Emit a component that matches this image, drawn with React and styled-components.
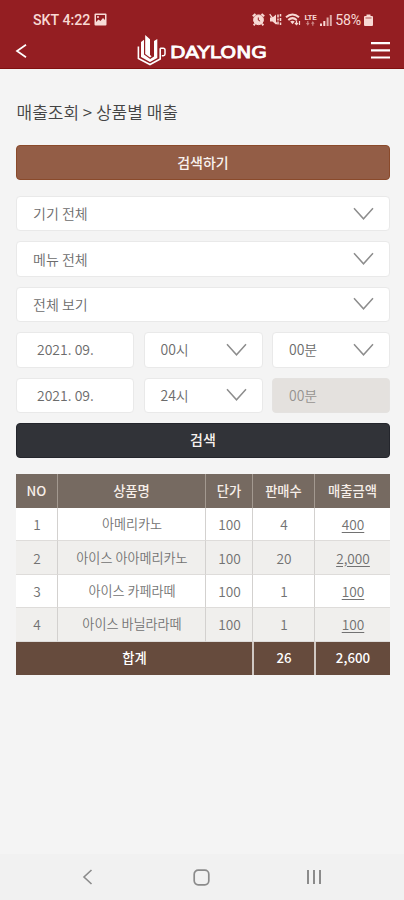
import React from "react";
import styled, { createGlobalStyle, css } from "styled-components";

const GlobalStyle = createGlobalStyle`
  * {
    box-sizing: border-box;
  }

  body {
    margin: 0;
    background: #f4f4f4;
    color: #666;
    font-family: "Noto Sans CJK KR", "Noto Sans", sans-serif;
  }
`;

const Screen = styled.div`
  display: flex;
  flex-direction: column;
  width: 404px;
  height: 900px;
  overflow: hidden;
`;

const Header = styled.header`
  height: 69px;
  flex: none;
  background: #941e22;
  border-bottom: 1px solid #80100f;
  color: #fff;
`;

const StatusBar = styled.div`
  display: flex;
  align-items: center;
  justify-content: space-between;
  height: 33px;
  padding: 7px 31px 0 33px;
  color: #f8d9d4;
  font-family: Roboto, sans-serif;
  font-size: 14.2px;
  font-weight: 500;
  line-height: 1;
`;

const StatusGroup = styled.div`
  display: flex;
  align-items: center;
  gap: ${({ $gap }) => $gap};
`;

const Percent = styled.span`
  font-weight: 400;
  letter-spacing: -0.3px;
`;

const NavBar = styled.div`
  display: flex;
  align-items: center;
  justify-content: space-between;
  height: 35px;
  padding: 0 14px 0 15px;
`;

const IconButton = styled.button`
  display: flex;
  padding: 0;
  border: 0;
  background: none;
  color: inherit;
`;

const Logo = styled.div`
  display: flex;
  align-items: center;
  margin-left: 7px;
`;

const Content = styled.main`
  flex: 1;
  padding: 29px 14px 0 16px;
`;

const Title = styled.h1`
  margin: 0 0 20px;
  padding-left: 0.5px;
  color: #444;
  font-size: 17px;
  font-weight: 350;
  line-height: 27px;
`;

const Button = styled.button`
  display: block;
  width: 100%;
  height: 35px;
  padding: 0 0 2px;
  border: 1px solid ${({ $dark }) => ($dark ? "#24262c" : "#8a4a2b")};
  border-radius: 4px;
  background: ${({ $dark }) => ($dark ? "#313338" : "#935d46")};
  color: #f8f2ef;
  font-family: inherit;
  font-size: 14px;
  font-weight: 500;
  line-height: 20px;
`;

const Filters = styled.div`
  display: flex;
  flex-direction: column;
  gap: 10px;
  margin: 16px 0 10px;
`;

const FilterRow = styled.div`
  display: grid;
  grid-template-columns: 118px 119px 118px;
  justify-content: space-between;
`;

const Field = styled.div`
  display: flex;
  align-items: center;
  justify-content: space-between;
  height: 35.4px;
  padding: 0 15px 1px ${({ $date }) => ($date ? "20px" : "16px")};
  border: 1px solid #e9e9e9;
  border-radius: 4px;
  background: #fff;
  color: #6c6c6c;
  font-size: 14px;
  font-weight: 350;
  line-height: 20px;

  ${({ $disabled }) =>
    $disabled &&
    css`
      background: #e4e1de;
      border-color: #e4e2e0;
      color: #969390;
    `}
`;

const SalesTable = styled.table`
  width: 374px;
  margin-top: 16px;
  table-layout: fixed;
  border-collapse: separate;
  border-spacing: 0;
  font-size: 13.3px;
  text-align: center;
`;

const HeadCell = styled.th`
  height: 34px;
  padding: 0;
  background: #766a61;
  color: #f7efe9;
  font-weight: 500;
  line-height: 20px;

  & + & {
    border-left: 1px solid #a39990;
  }
`;

const Cell = styled.td`
  height: 33.4px;
  padding: 0 0 0 1px;
  border-bottom: 1px solid #dedcda;
  color: #727272;
  font-size: ${({ $name }) => ($name ? "13.1px" : "13.7px")};
  font-weight: 350;
  line-height: 20px;
  text-decoration: ${({ $link }) => ($link ? "underline" : "none")};
  text-underline-offset: 2px;

  & + & {
    border-left: 1px solid #d3d1cf;
  }
`;

const Row = styled.tr`
  background: #fff;

  &:nth-child(even) {
    background: #f0efed;
  }
`;

const TotalCell = styled.td`
  height: 33px;
  padding: 0 0 0 1px;
  background: #664b3d;
  color: #fff;
  font-weight: 500;
  line-height: 20px;

  & + & {
    padding-left: 0;
    border-left: 2px solid #d0c8c3;
  }
`;

const SystemNav = styled.nav`
  display: flex;
  align-items: center;
  justify-content: space-between;
  height: 46px;
  padding: 0 82px 0 80px;
  background: #f1f1f1;
  color: #8b8b8b;
`;

const PictureIcon = () => (
  <svg width="13" height="13" viewBox="0 0 13 13">
    <rect x="0.5" y="0.5" width="12" height="12" rx="1" fill="#f8ddd8" />
    <path d="M2 2h9v5L9 5 6.5 8 4.5 6.5 2 9z" fill="#941e22" />
    <circle cx="4" cy="4" r="1" fill="#f8ddd8" />
  </svg>
);

const AlarmIcon = () => (
  <svg width="13" height="13" viewBox="0 0 13 13" fill="none" stroke="currentColor">
    <circle cx="6.5" cy="6.8" r="4.9" fill="currentColor" />
    <path d="M.8 3.3 3.5 1M12.2 3.3 9.5 1M3 10.7l-1.3 1.6M10 10.7l1.3 1.6" strokeWidth="2" />
    <path d="M6.3 4.5v2.6l1.8 1" stroke="#941e22" strokeWidth="1" />
  </svg>
);

const MuteIcon = () => (
  <svg width="13" height="13" viewBox="0 0 13 13" fill="none" stroke="currentColor">
    <path d="M1 4.5h2.5L7 1.5v10L3.5 8.5H1z" fill="currentColor" stroke="none" />
    <path d="M.7 1.2 8 11" strokeWidth="1.3" />
    <path d="M9 1.5v3M9 5.5v2M9 8.5v3M11.5 1v2.5M11.5 5v3M11.5 9.5V12" strokeWidth="1.5" />
  </svg>
);

const WifiIcon = () => (
  <svg width="16" height="13" viewBox="0 0 16 13" fill="none" stroke="currentColor">
    <path d="M1 4.3c4-3.6 9-3.6 13 0M3.3 6.9c2.7-2.3 5.7-2.3 8.4 0" strokeWidth="2" />
    <path d="M5.2 8.6c1.5-1 3-1 4.5 0l-2.2 2.6z" fill="currentColor" stroke="none" />
    <path d="M11.5 7.5v4M10 10l1.5 1.7L13 10M14.5 12V8" strokeWidth="1.2" />
  </svg>
);

const LteWrap = styled.span`
  display: flex;
  flex-direction: column;
  align-items: center;
  width: 13px;
  font-size: 8px;
  font-weight: 700;
  line-height: 7px;
  letter-spacing: -0.3px;
`;

const LteIcon = () => (
  <LteWrap>
    LTE
    <svg width="9" height="5" viewBox="0 0 9 5" fill="currentColor" opacity="0.55">
      <path d="M0 2h1.2V0h1.2v2h1.2L1.8 4.7zM5 2.7 6.8 0l1.8 2.7H7.4v2H6.2v-2z" />
    </svg>
  </LteWrap>
);

const SignalIcon = () => (
  <svg width="12" height="12" viewBox="0 0 12 12" fill="currentColor">
    <path d="M0 9.5h2V12H0zM3.3 7h2v5h-2z" />
    <path d="M6.6 3.5h2V12h-2zM9.8 1h2v11h-2z" opacity="0.75" />
  </svg>
);

const BatteryIcon = () => (
  <svg width="9" height="12" viewBox="0 0 9 12" fill="currentColor">
    <path d="M2.5 .5h4V2H8q1 0 1 1v8q0 1-1 1H1q-1 0-1-1V3q0-1 1-1h1.5z" />
    <path d="M1.5 3.2h6v1.6h-6z" fill="#941e22" opacity="0.45" />
  </svg>
);

const LogoMark = () => (
  <svg width="32" height="33" viewBox="0 0 32 33" fill="none" stroke="#fff">
    <path d="M1.4 12.5V24.5L13 30.5 23.2 25V14.2" strokeWidth="1.6" />
    <path d="M4 8 7 5.8V20.5L13.2 25 17 22.5V7L20.300 5V24L13 28 4 23z" fill="#fff" stroke="none" />
    <path d="M8.200 1 13 5.200V21L14.600 22.200 13 23.600 8.200 20z" fill="#fff" stroke="none" />
    <path d="M23.200 14.200H26.300Q28 14.200 28 16V20Q28 21.700 26.300 21.700H24.800" strokeWidth="1.500" />
  </svg>
);

const Wordmark = () => (
  <svg width="99" height="20" viewBox="0 0 99 20">
    <text
      x="1"
      y="16.5"
      fill="#fff"
      stroke="#fff"
      strokeWidth="0.8"
      fontFamily="DejaVu Sans, sans-serif"
      fontSize="16.2"
      textLength="97"
      lengthAdjust="spacingAndGlyphs"
    >
      DAYLONG
    </text>
  </svg>
);

const Chevron = () => (
  <svg width="21" height="13" viewBox="0 0 21 13" fill="none" stroke="#8d8d8d" strokeWidth="1.5">
    <path d="M1 1.200 10.500 11.800 20 1.200" />
  </svg>
);

const selects = ["기기 전체", "메뉴 전체", "전체 보기"];

const periods = [
  { date: "2021. 09.", hour: "00시", minute: "00분" },
  { date: "2021. 09.", hour: "24시", minute: "00분", disabled: true },
];

const columns = [
  { label: "NO", width: 41 },
  { label: "상품명", width: 148 },
  { label: "단가", width: 47 },
  { label: "판매수", width: 62 },
  { label: "매출금액", width: 76 },
];

const sales = [
  { name: "아메리카노", price: "100", count: "4", amount: "400" },
  { name: "아이스 아아메리카노", price: "100", count: "20", amount: "2,000" },
  { name: "아이스 카페라떼", price: "100", count: "1", amount: "100" },
  { name: "아이스 바닐라라떼", price: "100", count: "1", amount: "100" },
];

const AppHeader = () => (
  <Header>
    <StatusBar>
      <StatusGroup $gap="4px">
        <span>SKT 4:22</span>
        <PictureIcon />
      </StatusGroup>
      <StatusGroup $gap="3.2px">
        <AlarmIcon />
        <MuteIcon />
        <WifiIcon />
        <LteIcon />
        <SignalIcon />
        <Percent>58%</Percent>
        <BatteryIcon />
      </StatusGroup>
    </StatusBar>
    <NavBar>
      <IconButton aria-label="뒤로">
        <svg width="12" height="14" viewBox="0 0 12 14" fill="none" stroke="currentColor" strokeWidth="1.7">
          <path d="M11 .8 2 7l9 6.2" />
        </svg>
      </IconButton>
      <Logo>
        <LogoMark />
        <Wordmark />
      </Logo>
      <IconButton aria-label="메뉴">
        <svg width="19" height="17" viewBox="0 0 19 17" fill="currentColor">
          <path d="M0 0h19v2.2H0zM0 7.2h19v2.2H0zM0 14.4h19v2.2H0z" />
        </svg>
      </IconButton>
    </NavBar>
  </Header>
);

const App = () => {
  return (
    <Screen>
      <GlobalStyle />
      <AppHeader />
      <Content>
        <Title>매출조회 &gt; 상품별 매출</Title>
        <Button>검색하기</Button>
        <Filters>
          {selects.map((label) => (
            <Field key={label}>
              {label}
              <Chevron />
            </Field>
          ))}
          {periods.map((period) => (
            <FilterRow key={period.hour}>
              <Field $date>{period.date}</Field>
              <Field>
                {period.hour}
                <Chevron />
              </Field>
              <Field $disabled={period.disabled}>
                {period.minute}
                {!period.disabled && <Chevron />}
              </Field>
            </FilterRow>
          ))}
        </Filters>
        <Button $dark>검색</Button>
        <SalesTable>
          <colgroup>
            {columns.map((column) => (
              <col key={column.label} width={column.width} />
            ))}
          </colgroup>
          <thead>
            <tr>
              {columns.map((column) => (
                <HeadCell key={column.label}>{column.label}</HeadCell>
              ))}
            </tr>
          </thead>
          <tbody>
            {sales.map((item, index) => (
              <Row key={item.name}>
                <Cell>{index + 1}</Cell>
                <Cell $name>{item.name}</Cell>
                <Cell>{item.price}</Cell>
                <Cell>{item.count}</Cell>
                <Cell $link>{item.amount}</Cell>
              </Row>
            ))}
          </tbody>
          <tfoot>
            <tr>
              <TotalCell colSpan={3}>합계</TotalCell>
              <TotalCell>26</TotalCell>
              <TotalCell>2,600</TotalCell>
            </tr>
          </tfoot>
        </SalesTable>
      </Content>
      <SystemNav>
        <svg width="16" height="16" viewBox="0 0 16 16" fill="none" stroke="currentColor" strokeWidth="1.6">
          <path d="M11.5 1 4 8l7.5 7" />
        </svg>
        <svg width="17" height="17" viewBox="0 0 17 17" fill="none" stroke="currentColor" strokeWidth="1.7">
          <rect x="1.2" y="1.2" width="14.6" height="14.6" rx="4" />
        </svg>
        <svg width="16" height="16" viewBox="0 0 16 16" fill="none" stroke="currentColor" strokeWidth="2">
          <path d="M2 1v14M8 1v14M14 1v14" />
        </svg>
      </SystemNav>
    </Screen>
  );
};

export default App;
